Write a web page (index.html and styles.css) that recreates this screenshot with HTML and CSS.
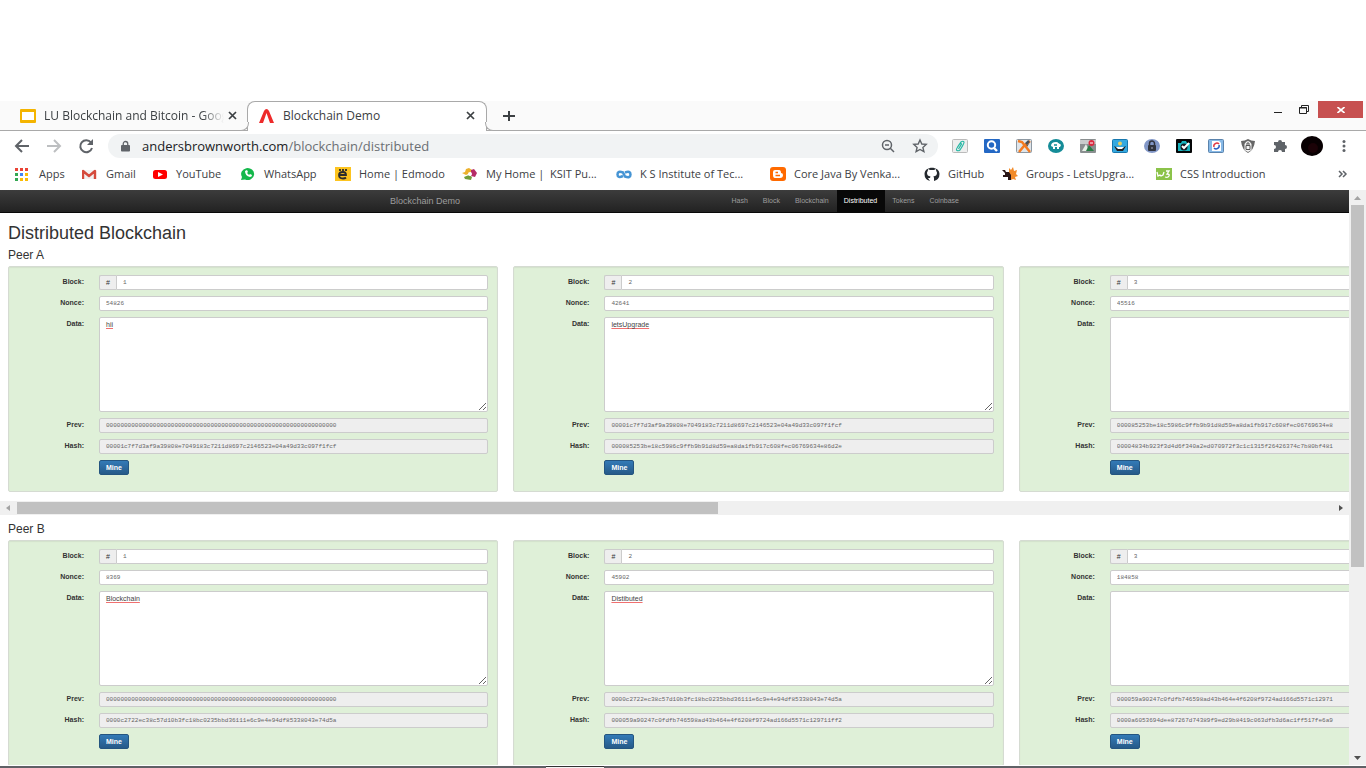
FILE: index.html
```html
<!DOCTYPE html>
<html lang="en">
<head>
<meta charset="utf-8">
<title>Blockchain Demo</title>
<link rel="stylesheet" href="styles.css">
</head>
<body>
<header class="browser">
  <div class="tabstrip">
    <div class="tab">
      <svg class="icon" viewBox="0 0 16 16"><rect width="16" height="14" y="1" rx="1" fill="#f4b400"/><rect x="2" y="4" width="12" height="8" fill="#fff"/></svg>
      <span class="tab-title fade">LU Blockchain and Bitcoin - Goog</span>
      <button class="plain" aria-label="Close tab"><svg width="9" height="9" viewBox="0 0 9 9"><path d="M1 1l7 7M8 1l-7 7" stroke="#3c4043" stroke-width="1.700"/></svg></button>
    </div>
    <div class="tab active">
      <svg class="icon" viewBox="0 0 16 16"><path d="M0 15L5 3q1-2 2.500-2T10 3l5 12h-4L7.500 5 4 15z" fill="#ee2b2b"/></svg>
      <span class="tab-title">Blockchain Demo</span>
      <button class="plain" aria-label="Close tab"><svg width="9" height="9" viewBox="0 0 9 9"><path d="M1 1l7 7M8 1l-7 7" stroke="#3c4043" stroke-width="1.700"/></svg></button>
    </div>
    <button class="plain new-tab" aria-label="New tab"><svg width="12" height="12" viewBox="0 0 12 12"><path d="M6 1v10M0 6h12" stroke="#3c4043" stroke-width="2"/></svg></button>
    <div class="window-buttons">
      <button class="plain" aria-label="Minimize"><svg width="8" height="10" viewBox="0 0 8 10"><path d="M0 7.500h8" stroke="#222" stroke-width="1"/></svg></button>
      <button class="plain" aria-label="Restore"><svg width="10" height="10" viewBox="0 0 10 10"><path d="M2.500 2V.5h7v6H8M.5 2.500h7v6h-7zM0 3h8" fill="none" stroke="#222"/></svg></button>
      <button class="plain close" aria-label="Close"><svg width="8" height="6" viewBox="0 0 8 6"><path d="M.5 0l7 6M7.500 0l-7 6" stroke="#fff" stroke-width="1.600"/></svg></button>
    </div>
  </div>
  <div class="toolbar">
    <button class="plain" aria-label="Back"><svg class="icon" viewBox="0 0 16 16"><path d="M15 8H2M8 2L2 8l6 6" fill="none" stroke="#5f6368" stroke-width="2"/></svg></button>
    <button class="plain" aria-label="Forward"><svg class="icon" viewBox="0 0 16 16"><path d="M1 8h13M8 2l6 6-6 6" fill="none" stroke="#bdbfc1" stroke-width="2"/></svg></button>
    <button class="plain" aria-label="Reload"><svg class="icon" viewBox="0 0 16 16"><path d="M13 4.500A6 6 0 1 0 14 10" fill="none" stroke="#5f6368" stroke-width="2"/><path d="M15 1v6H9z" fill="#5f6368"/></svg></button>
    <div class="omnibox">
      <svg class="lock" viewBox="0 0 10 12"><path d="M1 5h8q1 0 1 1v5q0 1-1 1H1q-1 0-1-1V6q0-1 1-1z" fill="#5f6368"/><path d="M2.500 6V3.500a2.500 2.500 0 0 1 5 0V6" fill="none" stroke="#5f6368" stroke-width="1.400"/></svg>
      <a class="url" href="#">andersbrownworth.com<span>/blockchain/distributed</span></a>
      <svg class="icon" viewBox="0 0 16 16"><circle cx="7" cy="7" r="4.500" fill="none" stroke="#5f6368" stroke-width="1.500"/><path d="M5 7h4M10 10l4 4" stroke="#5f6368" stroke-width="1.500"/></svg>
      <svg class="icon" viewBox="0 0 16 16"><path d="M8 2l1.800 4 4.400.4-3.300 3 1 4.300L8 11.500l-3.900 2.200 1-4.300-3.300-3L6.200 6z" fill="none" stroke="#5f6368" stroke-width="1.400"/></svg>
    </div>
    <div class="extensions">
      <svg class="icon" viewBox="0 0 16 16"><rect x=".5" y="1.500" width="15" height="13" rx="1" fill="#eee" stroke="#bbb"/><path d="M5 10l4-6q2-1.500 3 0 .5 1-4 8-2 1.500-3.500 0-.5-1 3-6 1-1 2 0l-3 5" fill="none" stroke="#27b8a5" stroke-width="1.200"/></svg>
      <svg class="icon" viewBox="0 0 16 16"><rect width="16" height="14" y="1" rx="1" fill="#2468c4"/><circle cx="7.500" cy="7" r="3.700" fill="none" stroke="#fff" stroke-width="2"/><path d="M10 10l3 3" stroke="#fff" stroke-width="2.400"/></svg>
      <svg class="icon" viewBox="0 0 16 16"><rect x=".5" y="1.500" width="15" height="13" rx="1" fill="#dfe5ea" stroke="#8d98a2"/><path d="M11 9L14 4l-2-1-4 4" fill="#48525c"/><path d="M2 3l4 1 8 10" fill="none" stroke="#f47b20" stroke-width="2.500"/><path d="M14 3l-6 5-5 6" fill="none" stroke="#f47b20" stroke-width="2.500"/><path d="M10 6l3-3" stroke="#48525c" stroke-width="2.500"/></svg>
      <svg class="icon" viewBox="0 0 16 16"><ellipse cx="8" cy="8" rx="8" ry="7" fill="#158c98"/><path d="M3 8q0-4 5-4 4 0 5 3l-1 2h-1v2H9v-2H7v2H5V9z" fill="#fff"/><path d="M6 7h3M10 4l3 2" stroke="#158c98" stroke-width="1.500"/></svg>
      <svg class="icon" viewBox="0 0 16 16"><rect width="16" height="14" y="1" rx="1" fill="#8a8f90"/><path d="M0 2h16v4H0z" fill="#c9cccc"/><path d="M2 13l4-7 3 7z" fill="#e8f0e8"/><path d="M6 13l3-6 5 6z" fill="#287b43"/><circle cx="11.500" cy="5" r="3" fill="#db2940"/><path d="M10 5h3" stroke="#fff"/></svg>
      <svg class="icon" viewBox="0 0 16 16"><rect x=".5" y="1.500" width="15" height="13" rx="1" fill="#35a9e0" stroke="#1878ae"/><path d="M2 8l4 2h4l4-2-3 5H5z" fill="#222"/><circle cx="8" cy="5.500" r="2" fill="#e7ce62"/><path d="M4 9h8l-2 2H6z" fill="#fff"/></svg>
      <svg class="icon" viewBox="0 0 16 16"><ellipse cx="8" cy="8" rx="8" ry="7" fill="#8297c7"/><rect x="4" y="7" width="8" height="6" rx="1" fill="#30343e"/><path d="M5.500 8V5.500a2.500 2.500 0 0 1 5 0V8" fill="none" stroke="#30343e" stroke-width="1.500"/><path d="M8 9v2" stroke="#aab"/></svg>
      <svg class="icon" viewBox="0 0 16 16"><rect width="16" height="14" y="1" rx="1" fill="#050708"/><path d="M2 5h3l1-2h4l1 2h3v8H2z" fill="#18b4be"/><circle cx="8" cy="9" r="3.500" fill="#101820"/><path d="M6 8l2 2 5-5" stroke="#fff" stroke-width="2" fill="none"/></svg>
      <svg class="icon" viewBox="0 0 16 16"><rect x=".5" y="1.500" width="15" height="13" rx="1" fill="#87b9e7" stroke="#5a83ac"/><path d="M4 3h7l2 2v8H4z" fill="#fff"/><path d="M11 6a3 3 0 0 0-5 3" fill="none" stroke="#e03744" stroke-width="1.500"/><path d="M6 10a3 3 0 0 0 5-3" fill="none" stroke="#285bc4" stroke-width="1.500"/></svg>
      <svg class="icon" viewBox="0 0 16 16"><path d="M1 3q4 0 7-2 3 2 7 2-1 9-7 12Q2 12 1 3z" fill="#666"/><path d="M4.500 12V6q3.500-6 7 0v6L8 14z" fill="#f4f4f4"/><path d="M6 7.500h4v4H6zM7 7V5h2v2" fill="none" stroke="#555"/></svg>
      <svg class="icon" viewBox="0 0 16 16"><path d="M2 4h4a2 2 0 0 1 4 0h3v3a2 2 0 0 1 0 4v3h-3a2 2 0 0 0-4 0H2v-3a2 2 0 0 0 0-4z" fill="#5f6368"/></svg>
      <svg class="avatar" viewBox="0 0 22 20"><ellipse cx="11" cy="10" rx="11" ry="10" fill="#080002"/><ellipse cx="12" cy="12" rx="5" ry="5" fill="#1b0207"/></svg>
      <svg class="icon" viewBox="0 0 16 16"><g fill="#5f6368"><circle cx="8" cy="3.500" r="1.500"/><circle cx="8" cy="8" r="1.500"/><circle cx="8" cy="12.500" r="1.500"/></g></svg>
    </div>
  </div>
  <nav class="bookmarks">
    <a href="#"><svg class="icon" viewBox="0 0 16 16"><path d="M0 2h3v3H0zM5 2h3v3H5z" fill="#ea4335"/><path d="M10 2h3v3h-3z" fill="#ea4335"/><path d="M0 7h3v3H0z" fill="#34a853"/><path d="M5 7h3v3H5z" fill="#4285f4"/><path d="M10 7h3v3h-3zM5 12h3v3H5zM10 12h3v3h-3z" fill="#fbbc04"/><path d="M0 12h3v3H0z" fill="#34a853"/></svg><span>Apps</span></a>
    <a href="#"><svg class="icon" viewBox="0 0 16 16"><path d="M1 4h12v9H1z" fill="#f2f2f2"/><path d="M1 13V5l6 5 6-5v8" fill="none" stroke="#d54b3d" stroke-width="2.400" stroke-linejoin="round"/></svg><span>Gmail</span></a>
    <a href="#"><svg class="icon" viewBox="0 0 16 16"><rect x="1" y="4" width="14" height="9" rx="2.500" fill="#f00"/><path d="M6 6l5 2.500L6 11z" fill="#fff"/></svg><span>YouTube</span></a>
    <a href="#"><svg class="icon" viewBox="0 0 16 16"><path d="M1 14l1-3a6.500 6 0 1 1 3 2.500z" fill="#14b84b"/><path d="M5 5l2-1 1 2-1 1 2 2 1-1 2 1q0 2-2 2Q5 10 5 5z" fill="#fff"/></svg><span>WhatsApp</span></a>
    <a href="#"><svg class="icon" viewBox="0 0 16 16"><rect width="16" height="14" y="1" fill="#fdc41f"/><path d="M4 9h7q0-3-3-3-4 0-4 3 0 3.500 4 3.500 2 0 3-1M5 3v2M8 3v2M11 3v2" fill="none" stroke="#2c2c2c" stroke-width="1.800"/></svg><span>Home | Edmodo</span></a>
    <a href="#"><svg class="icon" viewBox="0 0 16 16"><path d="M0 7l3-1 1-3 3-1 3 2-2 3-4 2z" fill="#ecb12c"/><path d="M9 4l3-1 3 4-2 4-4-1z" fill="#b52c67"/><path d="M2 11l5-2 3 2-1 3-6-1z" fill="#719d3a"/><circle cx="8" cy="8" r="2" fill="#fff"/></svg><span>My Home |&nbsp; KSIT Pu...</span></a>
    <a href="#"><svg class="icon" viewBox="0 0 16 16"><path d="M7 10Q1.500 12.500 1.500 8.500T7 6.500L9 10.500Q14.500 12.500 14.500 8.500T9 6.500" fill="none" stroke="#4594d4" stroke-width="2.500"/></svg><span>K S Institute of Tec...</span></a>
    <a href="#"><svg class="icon" viewBox="0 0 16 16"><rect width="16" height="14" y="1" rx="3" fill="#ff6a00"/><path d="M5 4h4q2 0 2 3 2 0 2 2 0 3-3 3H5q-2 0-2-3V6q0-2 2-2z" fill="#fff"/><path d="M5.500 6.500H8M5.500 9.500H10" stroke="#ff6a00" stroke-width="1.500"/></svg><span>Core Java By Venka...</span></a>
    <a href="#"><svg class="icon" viewBox="0 0 16 16"><path d="M6 15Q.5 13.500.5 8C.5-.5 15.500-.5 15.500 8q0 5.500-5.500 7v-3q0-1-.7-1.500Q13 10 13 7q0-1-.8-2l-.2-2-2 1H6L4 3l-.2 2Q3 6 3 7q0 3 3.500 3.500L6 12H4z" fill="#24292e"/></svg><span>GitHub</span></a>
    <a href="#"><svg class="icon" viewBox="0 0 16 16"><path d="M7 7V2l2 2 2-3 1 4 3-1-1 4 2 2-3 1 1 3-3-1-2 1-2-4z" fill="#f28b29"/><path d="M0 4h3l1 2h3l2 3v5H6v-3H1V9h2V7z" fill="#2a1717"/></svg><span>Groups - LetsUpgra...</span></a>
    <a href="#"><svg class="icon" viewBox="0 0 16 16"><rect width="16" height="12" y="2" fill="#8bc34a"/><path d="M1 6l1 4 2-1 1 1 2-1 1-3M10 5h3l-2 3q3 0 2 2-1 2-4 1" fill="none" stroke="#fff" stroke-width="1.300"/></svg><span>CSS Introduction</span></a>
    <button class="plain" aria-label="More bookmarks"><svg width="10" height="8" viewBox="0 0 10 8"><path d="M1 1l3 3-3 3M5 1l3 3-3 3" fill="none" stroke="#5f6368" stroke-width="1.500"/></svg></button>
  </nav>
</header>

<div class="viewport">
  <main class="page">
    <nav class="navbar">
      <div class="navbar-inner">
        <a class="brand" href="#">Blockchain Demo</a>
        <div class="nav-links">
          <a href="#">Hash</a><a href="#">Block</a><a href="#">Blockchain</a><a class="current" href="#">Distributed</a><a href="#">Tokens</a><a href="#">Coinbase</a>
        </div>
      </div>
    </nav>
    <h1>Distributed Blockchain</h1>
    <section>
      <h2>Peer A</h2>
      <div class="chain">
        <form class="block">
          <label for="a1b">Block:</label><div class="group"><span>#</span><input id="a1b" value="1"></div>
          <label for="a1n">Nonce:</label><input id="a1n" value="54826">
          <label for="a1d">Data:</label><textarea id="a1d">hii</textarea>
          <label for="a1p">Prev:</label><input id="a1p" class="hash" readonly value="0000000000000000000000000000000000000000000000000000000000000000">
          <label for="a1h">Hash:</label><input id="a1h" class="hash" readonly value="00001c7f7d3af9a39808e7049183c7211d8697c2146523e04a49d33c097f1fcf">
          <button class="mine" type="button">Mine</button>
        </form>
        <form class="block">
          <label for="a2b">Block:</label><div class="group"><span>#</span><input id="a2b" value="2"></div>
          <label for="a2n">Nonce:</label><input id="a2n" value="42641">
          <label for="a2d">Data:</label><textarea id="a2d">letsUpgrade</textarea>
          <label for="a2p">Prev:</label><input id="a2p" class="hash" readonly value="00001c7f7d3af9a39808e7049183c7211d8697c2146523e04a49d33c097f1fcf">
          <label for="a2h">Hash:</label><input id="a2h" class="hash" readonly value="000085253be18c5986c9ffb9b91d8d59ea8da1fb917c608fec06769634e86d2e">
          <button class="mine" type="button">Mine</button>
        </form>
        <form class="block">
          <label for="a3b">Block:</label><div class="group"><span>#</span><input id="a3b" value="3"></div>
          <label for="a3n">Nonce:</label><input id="a3n" value="45516">
          <label for="a3d">Data:</label><textarea id="a3d"></textarea>
          <label for="a3p">Prev:</label><input id="a3p" class="hash" readonly value="000085253be18c5986c9ffb9b91d8d59ea8da1fb917c608fec06769634e8">
          <label for="a3h">Hash:</label><input id="a3h" class="hash" readonly value="00004834b923f3d4d6f340a2ed070972f3c1c1315f26426374c7b80bf481">
          <button class="mine" type="button">Mine</button>
        </form>
      </div>
      <div class="hscroll"><svg width="17" height="14" viewBox="0 0 17 14"><path d="M10 4v6L6 7z" fill="#a3a3a3"/></svg><div class="hthumb"></div><svg width="17" height="14" viewBox="0 0 17 14"><path d="M7 4v6l4-3z" fill="#505050"/></svg></div>
    </section>
    <section>
      <h2>Peer B</h2>
      <div class="chain">
        <form class="block">
          <label for="b1b">Block:</label><div class="group"><span>#</span><input id="b1b" value="1"></div>
          <label for="b1n">Nonce:</label><input id="b1n" value="8369">
          <label for="b1d">Data:</label><textarea id="b1d">Blockchain</textarea>
          <label for="b1p">Prev:</label><input id="b1p" class="hash" readonly value="0000000000000000000000000000000000000000000000000000000000000000">
          <label for="b1h">Hash:</label><input id="b1h" class="hash" readonly value="0000c2722ec38c57d10b3fc18bc0235bbd36111e6c9e4e94df85338043e74d5a">
          <button class="mine" type="button">Mine</button>
        </form>
        <form class="block">
          <label for="b2b">Block:</label><div class="group"><span>#</span><input id="b2b" value="2"></div>
          <label for="b2n">Nonce:</label><input id="b2n" value="45902">
          <label for="b2d">Data:</label><textarea id="b2d">Distibuted</textarea>
          <label for="b2p">Prev:</label><input id="b2p" class="hash" readonly value="0000c2722ec38c57d10b3fc18bc0235bbd36111e6c9e4e94df85338043e74d5a">
          <label for="b2h">Hash:</label><input id="b2h" class="hash" readonly value="000059a90247c0fdfb746598ad43b464e4f6208f9724ad166d5571c129711ff2">
          <button class="mine" type="button">Mine</button>
        </form>
        <form class="block">
          <label for="b3b">Block:</label><div class="group"><span>#</span><input id="b3b" value="3"></div>
          <label for="b3n">Nonce:</label><input id="b3n" value="184858">
          <label for="b3d">Data:</label><textarea id="b3d"></textarea>
          <label for="b3p">Prev:</label><input id="b3p" class="hash" readonly value="000059a90247c0fdfb746598ad43b464e4f6208f9724ad166d5571c12971">
          <label for="b3h">Hash:</label><input id="b3h" class="hash" readonly value="0000a6053694dee87267d74389f9ed29b8419c063dfb3d6ac1ff517fe6a9">
          <button class="mine" type="button">Mine</button>
        </form>
      </div>
    </section>
  </main>
  <div class="vscroll"><svg width="17" height="15" viewBox="0 0 17 15"><path d="M5 10h7L8.500 6z" fill="#a3a3a3"/></svg><div class="vthumb"></div><svg width="17" height="15" viewBox="0 0 17 15"><path d="M5 6h7L8.500 10z" fill="#505050"/></svg></div>
</div>
<footer class="taskbar"><div></div></footer>
</body>
</html>
```
FILE: styles.css
```css
* { box-sizing: border-box; }

body {
  margin: 0;
  height: 100vh;
  padding-top: 101px;
  display: flex;
  flex-direction: column;
  overflow: hidden;
  background: #fff;
  color: #333;
  font-family: "Liberation Sans", Arial, sans-serif;
}

a { color: inherit; text-decoration: none; }
svg { display: block; flex: none; }
.icon { width: 16px; height: 16px; }

.plain {
  display: flex;
  align-items: center;
  justify-content: center;
  padding: 0;
  border: 0;
  background: none;
}

/* Browser chrome */
.browser { flex: none; font-family: "Open Sans", "Noto Sans", sans-serif; color: #3c4043; }

.tabstrip {
  display: flex;
  height: 30px;
  background: #fafafa;
  border-bottom: 1px solid #a9a9a9;
}
.tab {
  display: flex;
  align-items: center;
  gap: 4px;
  width: 247px;
  padding: 0 10px 0 20px;
  font-size: 12px;
}
.tab .icon { margin-right: 4px; }
.tab-title { flex: 1; overflow: hidden; white-space: nowrap; }
.fade { mask-image: linear-gradient(to right, #000 88%, transparent); }
.tab.active {
  position: relative;
  width: 240px;
  height: 30px;
  padding: 0 11px 2px;
  background: #fff;
  border: 1px solid #a9a9a9;
  border-bottom: 0;
  border-radius: 8px 8px 0 0;
}
.tab.active::before,
.tab.active::after {
  content: "";
  position: absolute;
  bottom: 0;
  width: 8px;
  height: 8px;
  background: #fafafa;
  border-bottom: 1px solid #a9a9a9;
}
.tab.active::before { left: -8px; border-right: 1px solid #a9a9a9; border-bottom-right-radius: 8px; }
.tab.active::after { right: -8px; border-left: 1px solid #a9a9a9; border-bottom-left-radius: 8px; }
.new-tab { margin-left: 16px; }
.window-buttons { display: flex; align-items: flex-start; gap: 17px; margin-left: auto; padding-right: 3px; }
.window-buttons button { height: 17px; }
.window-buttons .close { width: 45px; background: #c75050; margin-left: -8px; }

.toolbar { display: flex; align-items: center; height: 30px; padding-left: 14px; gap: 16px; }
.omnibox {
  flex: 1;
  display: flex;
  align-items: center;
  gap: 16px;
  height: 24px;
  margin-left: -2px;
  padding: 0 10px 0 13px;
  border-radius: 12px;
  background: #f1f3f4;
}
.lock { width: 9px; height: 12px; }
.url { flex: 1; margin-left: -4px; font-size: 13px; color: #202124; }
.url span { color: #6b6f73; }
.extensions { display: flex; align-items: center; gap: 16px; padding: 0 14px 0 0; margin-left: -2px; }
.avatar { width: 22px; height: 20px; margin: 0 -3px; }

.bookmarks {
  display: grid;
  grid-template-columns: 67px 70px 88px 95px 127px 154px 154px 154px 78px 154px 154px 1fr;
  align-items: center;
  height: 29px;
  padding: 0 18px 4px 15px;
  font-size: 11px;
}
.bookmarks a { display: flex; align-items: center; gap: 8px; padding-right: 4px; }
.bookmarks span { white-space: nowrap; }
.bookmarks button { justify-self: end; }

/* Page area */
.viewport { flex: 1; min-height: 0; display: flex; overflow: hidden; }
.page { flex: 1; min-width: 0; overflow: hidden; }

.navbar {
  height: 23px;
  background: linear-gradient(#3c3c3c, #222);
  border-bottom: 1px solid #080808;
  color: #9d9d9d;
}
.navbar-inner {
  display: flex;
  justify-content: space-between;
  max-width: 585px;
  height: 100%;
  margin: 0 auto;
  padding-left: 8px;
}
.brand { font-size: 9px; line-height: 22px; }
.nav-links { display: flex; font-size: 7px; line-height: 22px; }
.nav-links a { padding: 0 8px 0 7px; }
.nav-links .current { background: #080808; color: #fff; }

h1 { margin: 10px 8px 5px; font-size: 18px; line-height: 20px; font-weight: 400; }
h2 { margin: 0 8px 3px; font-size: 12px; line-height: 15px; font-weight: 400; }
section + section { padding-top: 7px; }

.chain { display: flex; gap: 15px; padding-left: 8px; overflow: hidden; }
.block {
  flex: 0 0 calc(37vw - 15px);
  display: grid;
  grid-template-columns: 75px 1fr;
  gap: 6px 15px;
  align-items: start;
  padding: 8px 9px 16px 0;
  border: 1px solid #d5dbd2;
  border-radius: 2px;
  background: #dff0d8;
  box-shadow: inset 0 1px 1px #d3e2cd;
}
label { padding-top: 2px; font-size: 7px; line-height: 9px; font-weight: 700; text-align: right; }
input, textarea {
  display: block;
  width: 100%;
  min-width: 0;
  margin: 0;
  border: 1px solid #ccc;
  border-radius: 2px;
  background: #fff;
  color: #666;
  outline: 0;
}
input { height: 15px; padding: 0 6px; font: 6px/13px "Liberation Mono", monospace; }
textarea {
  height: 95px;
  padding: 3px 6px;
  font: 7px/8px "Liberation Sans", Arial, sans-serif;
  color: #444;
  text-decoration: underline #f07070;
  resize: vertical;
}
.hash { background: #eee; }
.group { display: flex; }
.group span {
  flex: 0 0 17px;
  border: 1px solid #ccc;
  border-right: 0;
  border-radius: 2px 0 0 2px;
  background: #eee;
  font-size: 7px;
  line-height: 13px;
  text-align: center;
}
.group input { border-radius: 0 2px 2px 0; }
.mine {
  grid-column: 2;
  justify-self: start;
  height: 15px;
  padding: 0 6px;
  border: 1px solid #245580;
  border-radius: 2px;
  background: linear-gradient(#337ab7, #265a88);
  color: #fff;
  font: 700 7px/12px "Liberation Sans", Arial, sans-serif;
}

.hscroll { display: flex; align-items: center; height: 14px; margin-top: 9px; background: #f0f0f0; }
.hthumb { width: 52%; height: 12px; margin-right: auto; background: #c1c1c1; }
.vscroll { display: flex; flex-direction: column; flex: 0 0 17px; align-items: center; background: #f0f0f0; }
.vthumb { width: 13px; height: 63%; margin-bottom: auto; background: #c1c1c1; }

.taskbar { flex: none; height: 3px; border-top: 1px solid #fff; background: #5f6166; }
.taskbar div { width: 58px; height: 2px; margin-left: 40%; background: #f4f4f4; border-top: 1px solid #333; }
```
